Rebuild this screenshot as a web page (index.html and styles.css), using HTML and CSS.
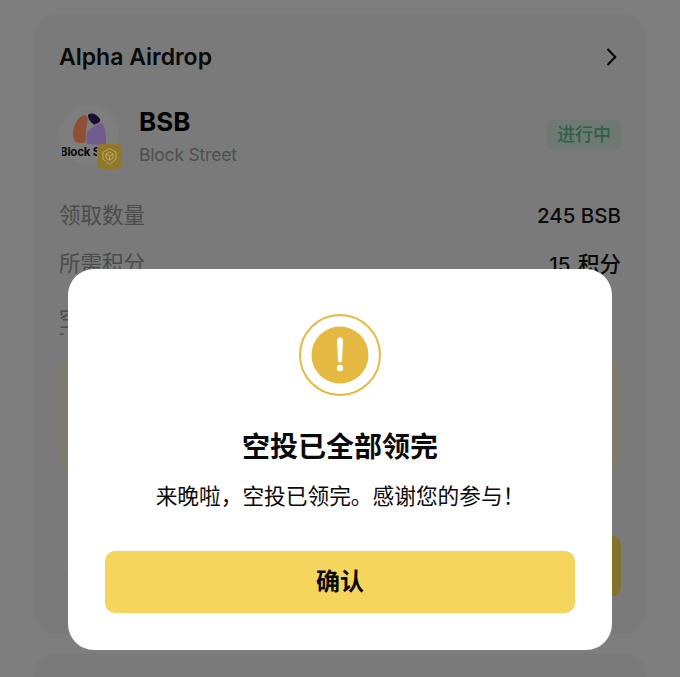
FILE: index.html
```html
<!DOCTYPE html>
<html lang="zh-CN">
<head>
<meta charset="utf-8">
<title>Alpha Airdrop</title>
<link rel="stylesheet" href="styles.css">
</head>
<body>
<main class="page">
  <section class="card">
    <header class="card-head">
      <h2 class="card-title">Alpha Airdrop</h2>
      <svg class="chevron" width="14" height="20" viewBox="0 0 14 20"><path d="M2.500 2 10.300 10 2.500 18" fill="none" stroke="#000" stroke-width="2"/></svg>
    </header>
    <div class="token">
      <div class="avatar">
        <svg class="logo" width="60" height="60" viewBox="0 0 60 60">
          <circle cx="30" cy="30" r="30" fill="#7e7e7e"/>
          <path d="M14 28C14 19 21 10 26 10 29 10 29 15 28 20 26.500 26 27.500 33 26 37.500 23 38.500 18 38.500 15.500 36 14.500 34 14 31 14 28Z" fill="#8f4f35"/>
          <path d="M29 10C32 7 38 9 41 14 42 17 38 19 35 19.500 32 18 28.500 13 29 10Z" fill="#17102f"/>
          <path d="M28.500 27C31 23 38 20 42 18 46 20 47.500 30 47 39 40 40 34 40 28 38.500 27.500 34 27.500 31 28.500 27Z" fill="#735a8c"/>
        </svg>
        <span class="logo-text">Block Street</span>
        <span class="chain">
          <svg width="19" height="19" viewBox="0 0 19 19" fill="none" stroke="#bda85f" stroke-width="1"><path d="M9.500 1.500 16 5.200v6.800L9.500 17.500 3 12V5.200z"/><path d="M9.500 5 13 7v4.200L9.500 13.200 6 11.200V7z"/><path d="M6 7 9.500 9 13 7M9.500 9v4.200"/></svg>
        </span>
      </div>
      <div class="token-info">
        <div class="symbol">BSB</div>
        <div class="project">Block Street</div>
      </div>
      <span class="tag">进行中</span>
    </div>
    <dl class="rows">
      <div class="row"><dt>领取数量</dt><dd>245 BSB</dd></div>
      <div class="row"><dt>所需积分</dt><dd>15 <span class="unit">积分</span></dd></div>
      <div class="row row-last"><dt>空投时间</dt><dd></dd><span class="row-sub">- .</span></div>
    </dl>
    <div class="notice"></div>
    <div class="actions">
      <span class="ring"></span>
      <span class="cta"></span>
    </div>
  </section>
  <section class="card card-next"></section>
</main>

<div class="overlay">
  <div class="dialog">
    <svg class="alert" width="84" height="84" viewBox="0 0 84 84">
      <circle cx="42" cy="42" r="40" fill="#fff" stroke="#e6b942" stroke-width="2"/>
      <circle cx="42" cy="42" r="28.500" fill="#e6b942"/>
      <path d="M39 27.500a3 3 0 0 1 6 0L44 47.500a2 2 0 0 1-4 0z" fill="#fff"/>
      <circle cx="42" cy="55" r="3.200" fill="#fff"/>
    </svg>
    <h1 class="dialog-title">空投已全部领完</h1>
    <p class="dialog-text">来晚啦，空投已领完。感谢您的参与！</p>
    <button class="confirm" type="button">确认</button>
  </div>
</div>
</body>
</html>
```
FILE: styles.css
```css
* { box-sizing: border-box; }
html, body { margin: 0; height: 100%; }
body {
  background: #7e7e7e;
  font-family: Inter, "Noto Sans CJK SC", sans-serif;
  overflow: hidden;
}
.page { padding: 15px 35px 0; display: flex; flex-direction: column; gap: 19px; height: 677px; overflow: hidden; }
.card { background: #7a7a7a; border-radius: 20px; padding: 24px; height: 619px; flex: none; display: flex; flex-direction: column; }
.card-next { height: 100px; }
.card-head { display: flex; justify-content: space-between; align-items: center; height: 36px; }
.card-title { margin: 0; font-size: 23px; font-weight: 600; color: #0a0a0a; line-height: 36px; }
.chevron { display: block; margin-right: 2px; }
.token { display: flex; align-items: flex-start; margin-top: 30px; height: 64px; }
.avatar { position: relative; width: 60px; height: 60px; flex: none; }
.logo { display: block; }
.logo-text { position: absolute; left: 3px; top: 40px; width: 40px; overflow: hidden; white-space: nowrap; font-size: 11.500px; font-weight: 700; letter-spacing: -0.2px; line-height: 14px; text-indent: -2px; color: #0a0a0a; }
.chain { position: absolute; left: 38px; top: 39px; width: 25px; height: 25px; border-radius: 5px; background: #8f7829; display: flex; align-items: center; justify-content: center; }
.token-info { margin-left: 20px; flex: 1; }
.symbol { font-size: 26px; font-weight: 700; line-height: 32px; margin-top: 1px; color: #000; }
.project { font-size: 17.500px; letter-spacing: -0.2px; line-height: 24px; margin-top: 5px; color: #4e4e4e; }
.tag { margin-top: 15px; width: 74px; height: 30px; border-radius: 6px; background: #6f7973; color: #2f6048; font-size: 18px; font-weight: 500; line-height: 30px; text-align: center; }
.rows { margin: 22px 0 0; }
.row { display: flex; justify-content: space-between; align-items: center; height: 48px; }
.row-last { position: relative; margin-top: 7px; }
.row-sub { position: absolute; left: 0; top: 37px; font-size: 12px; line-height: 6px; font-weight: 700; color: #4c4c4c; }
.row dt { font-size: 21.500px; line-height: 22px; color: #4c4c4c; }
.row dd { margin: 2px 0 0; font-size: 20.500px; line-height: 26px; font-weight: 500; color: #0a0a0a; }
.unit { font-size: 21.500px; margin-left: 2px; }
.notice { margin-top: 16px; height: 112px; border-radius: 10px; background: #7e7a70; }
.actions { display: flex; align-items: center; justify-content: space-between; margin-top: 65px; height: 62px; }
.ring { width: 26px; height: 26px; margin-left: 5px; border-radius: 50%; border: 1px solid #828282; }
.cta { width: 200px; height: 62px; border-radius: 10px; background: #84722c; }
.overlay { position: fixed; inset: 0; }
.dialog { position: absolute; left: 68px; top: 269px; width: 544px; height: 381px; background: #fff; border-radius: 26px; padding: 44px 37px 37px; display: flex; flex-direction: column; align-items: center; }
.alert { display: block; flex: none; }
.dialog-title { margin: 31px 0 0; font-size: 28px; line-height: 38px; font-weight: 700; color: #0a0a0a; }
.dialog-text { margin: 14px 0 0; font-size: 21.700px; line-height: 32px; color: #0a0a0a; }
.confirm { margin-top: 39px; width: 100%; height: 62px; flex: none; border: 0; border-radius: 10px; background: #f6d55c; font: 700 24px/62px Inter, "Noto Sans CJK SC", sans-serif; color: #0a0a0a; padding: 0; }
```
